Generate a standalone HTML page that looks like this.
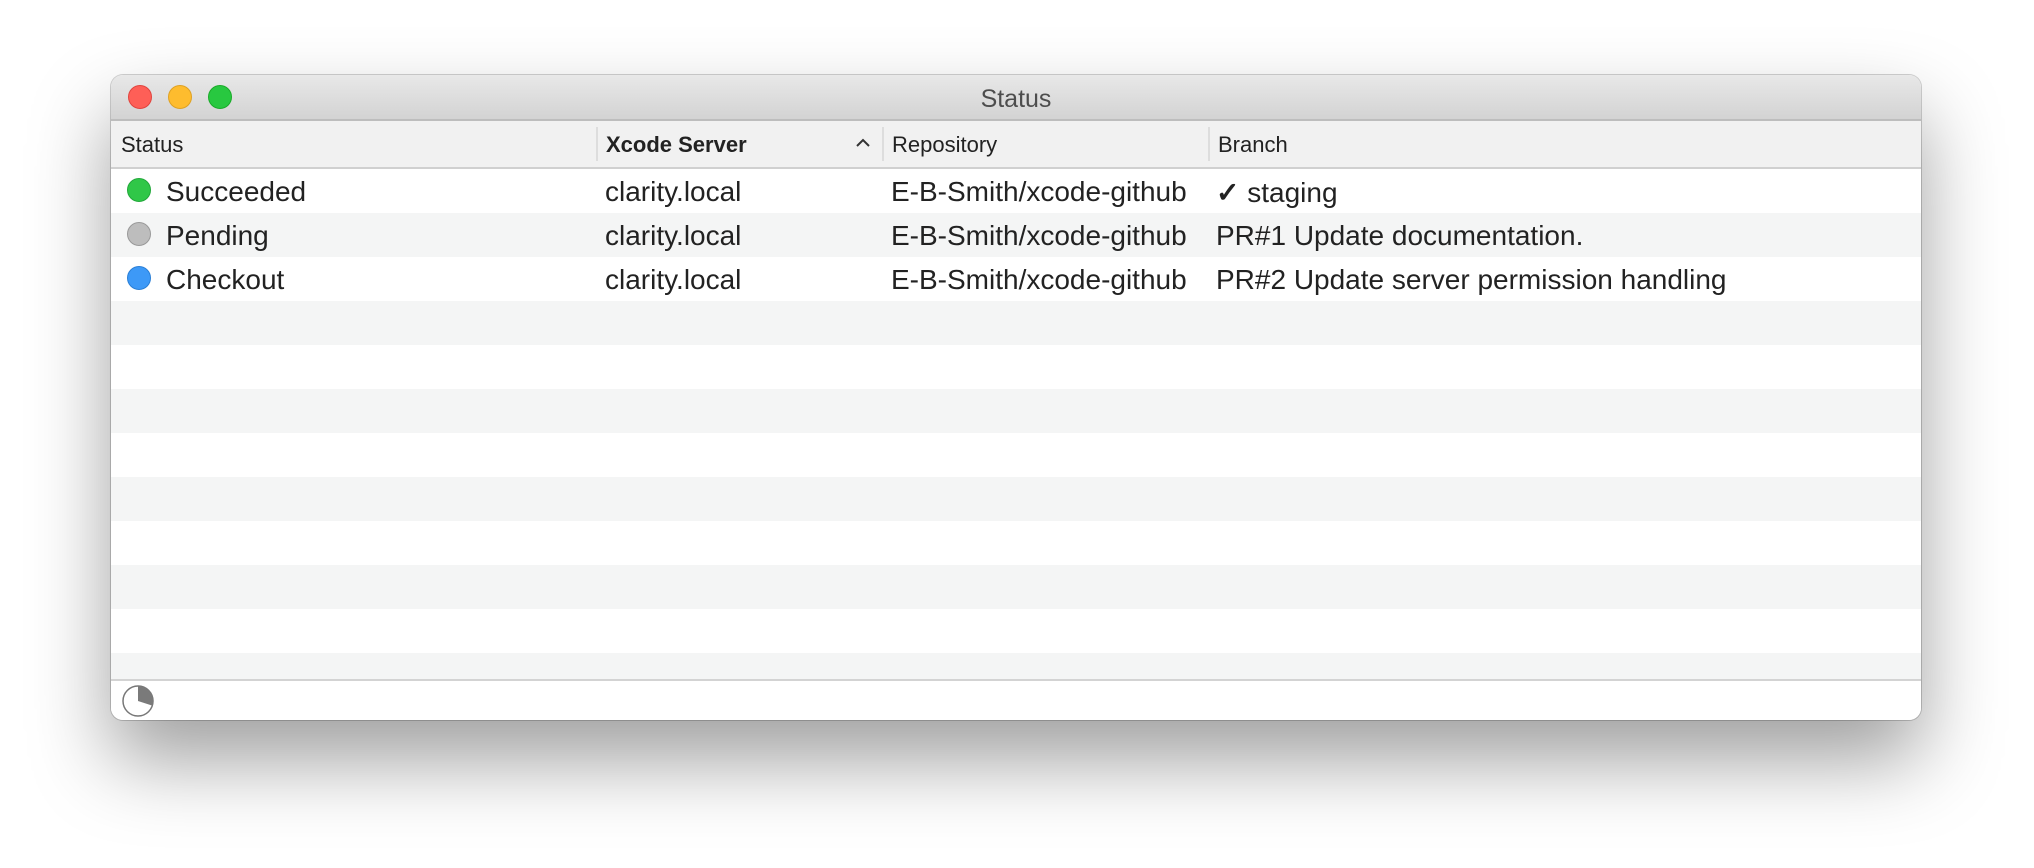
<!DOCTYPE html>
<html><head><style>
body{margin:0;width:2034px;height:868px;background:#fff;font-family:"Liberation Sans",sans-serif;position:relative;overflow:hidden}
.win{position:absolute;left:111px;top:75px;width:1810px;height:645px;border-radius:12px;background:#fff;box-shadow:0 40px 80px rgba(0,0,0,.38),0 0 0 1px rgba(0,0,0,.18);overflow:hidden}
.title{position:absolute;left:0;top:0;right:0;height:44px;background:linear-gradient(#e8e8e8,#d3d3d3);border-bottom:2px solid #bdbdbd}
.title span{position:absolute;left:0;right:0;text-align:center;top:10px;font-size:25px;color:#4d4d4d}
.tl{position:absolute;top:10px;width:22px;height:22px;border-radius:50%}
.hdr{position:absolute;left:0;right:0;top:46px;height:46px;background:#f1f1f1;border-bottom:2px solid #d0d0d0;font-size:22px;color:#222}
.hdr div{position:absolute;top:11px}
.sep{position:absolute;top:6px;width:2px;height:34px;background:#ddd}
.row{position:absolute;left:0;right:0;height:44px;font-size:28px;color:#222}
.row div{position:absolute;top:7px}
.dot{position:absolute;left:16px;top:9px;width:22px;height:22px;border-radius:50%}
.foot{position:absolute;left:0;right:0;top:604px;height:41px;border-top:2px solid #d3d3d3;background:#fff}
</style></head><body>
<div class="win">
<div class="title">
<div class="tl" style="left:17px;background:#fe5f57;border:1px solid #e0443e"></div>
<div class="tl" style="left:57px;background:#febc2e;border:1px solid #dea123"></div>
<div class="tl" style="left:97px;background:#28c840;border:1px solid #1aab29"></div>
<span>Status</span></div>
<div class="hdr">
<div style="left:10px">Status</div>
<span class="sep" style="left:485px"></span>
<div style="left:495px;font-weight:bold">Xcode Server</div>
<svg style="position:absolute;left:744px;top:16px" width="16" height="12"><path d="M2 9 L8 3 L14 9" fill="none" stroke="#333" stroke-width="2"/></svg>
<span class="sep" style="left:771px"></span>
<div style="left:781px">Repository</div>
<span class="sep" style="left:1097px"></span>
<div style="left:1107px">Branch</div>
</div>
<div class="row" style="top:94px;background:#fff"><span class="dot" style="background:#30c748;border:1px solid #22a83a"></span><div style="left:55px">Succeeded</div><div style="left:494px">clarity.local</div><div style="left:780px">E-B-Smith/xcode-github</div><div style="left:1105px"><b>✓</b> staging</div></div>
<div class="row" style="top:138px;background:#f4f5f5"><span class="dot" style="background:#bdbdbd;border:1px solid #999"></span><div style="left:55px">Pending</div><div style="left:494px">clarity.local</div><div style="left:780px">E-B-Smith/xcode-github</div><div style="left:1105px">PR#1 Update documentation.</div></div>
<div class="row" style="top:182px;background:#fff"><span class="dot" style="background:#3d99f7;border:1px solid #2a7fd6"></span><div style="left:55px">Checkout</div><div style="left:494px">clarity.local</div><div style="left:780px">E-B-Smith/xcode-github</div><div style="left:1105px">PR#2 Update server permission handling</div></div>
<div class="row" style="top:226px;background:#f4f5f5"></div>
<div class="row" style="top:314px;background:#f4f5f5"></div>
<div class="row" style="top:402px;background:#f4f5f5"></div>
<div class="row" style="top:490px;background:#f4f5f5"></div>
<div class="row" style="top:578px;background:#f4f5f5"></div>
<div class="foot">
<svg style="position:absolute;left:10px;top:3px" width="34" height="34"><circle cx="17" cy="17" r="15" fill="#fff" stroke="#777" stroke-width="1.5"/><path d="M17 17 L17 2 A15 15 0 0 1 31.3 21.6 Z" fill="#7a7a7a"/></svg>
</div>
</div>
</body></html>
